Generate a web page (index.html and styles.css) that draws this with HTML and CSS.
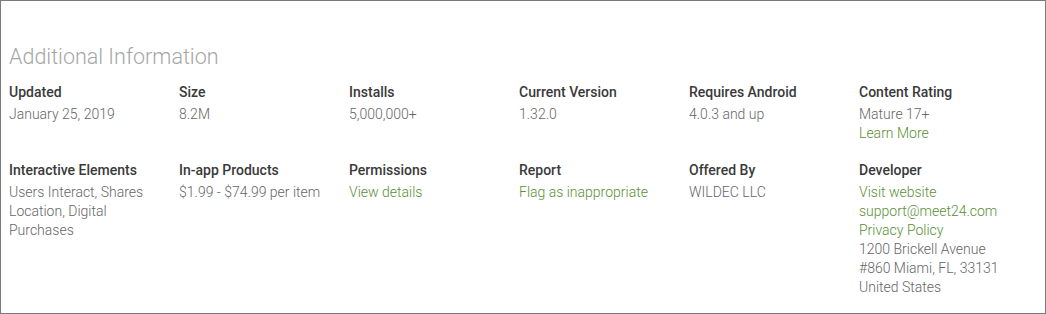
FILE: index.html
```html
<!DOCTYPE html>
<html lang="en">
<head>
    <meta charset="UTF-8">
    <title>Additional Information</title>
    <link rel="stylesheet" href="styles.css">
</head>
<body>
    <div class="info-box">
        <h2 class="info-title">Additional Information</h2>
        <div class="info-grid">
            <div class="info-item">
                <div class="label">Updated</div>
                <div class="value">January 25, 2019</div>
            </div>
            <div class="info-item">
                <div class="label">Size</div>
                <div class="value">8.2M</div>
            </div>
            <div class="info-item">
                <div class="label">Installs</div>
                <div class="value">5,000,000+</div>
            </div>
            <div class="info-item">
                <div class="label">Current Version</div>
                <div class="value">1.32.0</div>
            </div>
            <div class="info-item">
                <div class="label">Requires Android</div>
                <div class="value">4.0.3 and up</div>
            </div>
            <div class="info-item">
                <div class="label">Content Rating</div>
                <div class="value">Mature 17+</div>
                <a class="link" href="#">Learn More</a>
            </div>

            <div class="info-item">
                <div class="label">Interactive Elements</div>
                <div class="value">Users Interact, Shares Location, Digital Purchases</div>
            </div>
            <div class="info-item">
                <div class="label">In-app Products</div>
                <div class="value">$1.99 - $74.99 per item</div>
            </div>
            <div class="info-item">
                <div class="label">Permissions</div>
                <a class="link" href="#">View details</a>
            </div>
            <div class="info-item">
                <div class="label">Report</div>
                <a class="link" href="#">Flag as inappropriate</a>
            </div>
            <div class="info-item">
                <div class="label">Offered By</div>
                <div class="value">WILDEC LLC</div>
            </div>
            <div class="info-item">
                <div class="label">Developer</div>
                <a class="link" href="#">Visit website</a>
                <a class="link" href="#">support@meet24.com</a>
                <a class="link" href="#">Privacy Policy</a>
                <div class="value">1200 Brickell Avenue #860 Miami, FL, 33131 United States</div>
            </div>
        </div>
    </div>
</body>
</html>
```

FILE: styles.css
```css
body {
    margin: 0;
    background: #fff;
    font-family: Roboto, "Liberation Sans", sans-serif;
}

.info-box {
    width: 1046px;
    height: 314px;
    box-sizing: border-box;
    border: 1px solid #7a7a7a;
    padding: 41px 8px 0 8px;
}

.info-title {
    margin: 0 0 10px 0;
    font-size: 21.5px;
    font-weight: 300;
    line-height: 30px;
    color: #a6a6a6;
}

.info-grid {
    display: grid;
    grid-template-columns: repeat(6, 150px);
    column-gap: 20px;
    row-gap: 17px;
}

.info-item {
    display: flex;
    flex-direction: column;
    align-items: flex-start;
}

.label {
    font-size: 14px;
    font-weight: 500;
    line-height: 20px;
    color: #3a3a3a;
    margin-bottom: 3px;
}

.value {
    font-size: 14px;
    font-weight: 300;
    line-height: 19px;
    color: #666;
}

.link {
    font-size: 14px;
    font-weight: 300;
    line-height: 19px;
    color: #5a8f34;
    text-decoration: none;
}
```
